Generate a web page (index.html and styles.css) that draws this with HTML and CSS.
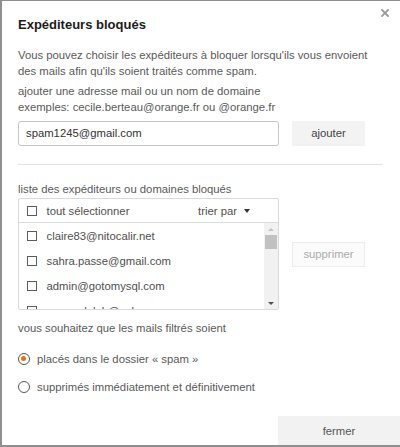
FILE: index.html
```html
<!DOCTYPE html>
<html lang="fr">
<head>
<meta charset="utf-8">
<title>Expéditeurs bloqués</title>
<link rel="stylesheet" href="styles.css">
</head>
<body>
<div class="dialog">
  <button class="close" aria-label="fermer">
    <svg width="8" height="8" viewBox="0 0 8 8"><path d="M1 1L7 7M7 1L1 7" stroke="#9a9a9a" stroke-width="1.8" stroke-linecap="square"/></svg>
  </button>
  <div class="content">
    <h1 class="title">Expéditeurs bloqués</h1>
    <p class="intro">Vous pouvez choisir les expéditeurs à bloquer lorsqu'ils vous envoient<br>des mails afin qu'ils soient traités comme spam.</p>
    <p class="hint">ajouter une adresse mail ou un nom de domaine<br>exemples: cecile.berteau@orange.fr ou @orange.fr</p>
    <div class="add-row">
      <div class="input">spam1245@gmail.com</div>
      <button class="btn">ajouter</button>
    </div>
    <div class="sep"></div>
    <p class="label">liste des expéditeurs ou domaines bloqués</p>
    <div class="list-row">
      <div class="listbox">
        <div class="list-head">
          <span class="cb"></span>
          <span class="head-label">tout sélectionner</span>
          <span class="sort">trier par</span>
          <span class="caret"></span>
        </div>
        <div class="list-body">
          <div class="items">
            <div class="item"><span class="cb"></span><span>claire83@nitocalir.net</span></div>
            <div class="item"><span class="cb"></span><span>sahra.passe@gmail.com</span></div>
            <div class="item"><span class="cb"></span><span>admin@gotomysql.com</span></div>
            <div class="item"><span class="cb"></span><span>nounoulaluh@yahoo.com</span></div>
          </div>
          <div class="scrollbar">
            <span class="arrow up"></span>
            <span class="thumb"></span>
            <span class="fill"></span>
            <span class="arrow down"></span>
          </div>
        </div>
      </div>
      <button class="btn disabled">supprimer</button>
    </div>
    <p class="label2">vous souhaitez que les mails filtrés soient</p>
    <div class="radios">
      <div class="radio-row"><span class="radio checked"></span><span>placés dans le dossier « spam »</span></div>
      <div class="radio-row"><span class="radio"></span><span>supprimés immédiatement et définitivement</span></div>
    </div>
  </div>
  <div class="footer">
    <button class="btn-close">fermer</button>
  </div>
</div>
</body>
</html>
```

FILE: styles.css
```css
* { box-sizing: border-box; }
html, body { margin: 0; padding: 0; background: #fff; }
body {
  font-family: "Liberation Sans", Arial, sans-serif;
  font-size: 11.3px;
  line-height: 16px;
  color: #5a5a5a;
}
.dialog {
  position: relative;
  width: 400px;
  height: 447px;
  border-top: 1px solid #8f8f8f;
  border-left: 2px solid #8f8f8f;
  border-bottom: 2px solid #8f8f8f;
  display: flex;
  flex-direction: column;
}
.close {
  position: absolute;
  top: 7px;
  right: 10px;
  width: 10px;
  height: 10px;
  padding: 0;
  border: 0;
  background: none;
  display: flex;
  align-items: center;
  justify-content: center;
}
.content {
  padding: 15.5px 17px 0 16px;
}
.title {
  margin: 0;
  font-size: 13px;
  line-height: 16px;
  font-weight: bold;
  color: #1c1c1c;
}
.intro { margin: 14px 0 0; }
.hint { margin: 4px 0 0; }
.add-row {
  display: flex;
  align-items: flex-start;
  gap: 13px;
  margin-top: 6px;
}
.input {
  width: 261px;
  height: 25px;
  border: 1px solid #c6c6c6;
  border-radius: 3px;
  padding: 0 7px;
  line-height: 23px;
  color: #333;
}
.btn {
  width: 73px;
  height: 25px;
  border: 0;
  background: #f3f3f3;
  font-family: inherit;
  font-size: 11.3px;
  color: #444;
  padding: 0;
}
.btn.disabled {
  background: #fbfbfb;
  border: 1px solid #ececec;
  color: #ababab;
}
.sep {
  height: 1px;
  background: #e4e4e4;
  margin-top: 18px;
}
.label { margin: 16.5px 0 0; }
.list-row {
  display: flex;
  align-items: center;
  gap: 13px;
  margin-top: 1px;
}
.listbox {
  width: 261px;
  border: 1px solid #dadada;
  border-radius: 2px;
  color: #505050;
}
.list-head {
  height: 24px;
  display: flex;
  align-items: center;
  padding: 0 28px 0 7.5px;
  border-bottom: 1px solid #dcdcdc;
}
.cb {
  width: 10px;
  height: 10px;
  border: 1px solid #5c5c5c;
  flex: none;
  margin-right: 10px;
}
.head-label { flex: 1; }
.sort { margin-right: 7px; }
.caret {
  width: 0;
  height: 0;
  border-left: 3.5px solid transparent;
  border-right: 3.5px solid transparent;
  border-top: 4px solid #333;
}
.list-body {
  height: 86px;
  display: flex;
  overflow: hidden;
}
.items {
  flex: 1;
  padding-top: 0;
}
.item {
  height: 25px;
  display: flex;
  align-items: center;
  padding-left: 7.5px;
}
.scrollbar {
  width: 14px;
  background: #f1f1f1;
  display: flex;
  flex-direction: column;
  align-items: center;
  padding: 5px 1px 4px;
}
.arrow {
  width: 0;
  height: 0;
  border-left: 3px solid transparent;
  border-right: 3px solid transparent;
}
.arrow.up { border-bottom: 3px solid #c4c4c4; }
.arrow.down { border-top: 3px solid #505050; }
.thumb {
  width: 12px;
  height: 14px;
  background: #c1c1c1;
  margin-top: 4px;
}
.fill { flex: 1; }
.label2 { margin: 9.5px 0 0; }
.radios {
  margin-top: 9px;
  display: flex;
  flex-direction: column;
}
.radio-row {
  height: 28.3px;
  display: flex;
  align-items: center;
  margin-left: -0.5px;
}
.radio {
  width: 12px;
  height: 12px;
  border: 1px solid #555;
  border-radius: 50%;
  margin-right: 7.5px;
  display: flex;
  align-items: center;
  justify-content: center;
  flex: none;
}
.radio.checked::after {
  content: "";
  width: 5px;
  height: 5px;
  border-radius: 50%;
  background: #f16e00;
}
.footer {
  margin-top: auto;
  display: flex;
  justify-content: flex-end;
}
.btn-close {
  width: 122px;
  height: 29px;
  border: 0;
  background: #f2f2f2;
  font-family: inherit;
  font-size: 11.3px;
  color: #555;
  padding: 0;
}
```
